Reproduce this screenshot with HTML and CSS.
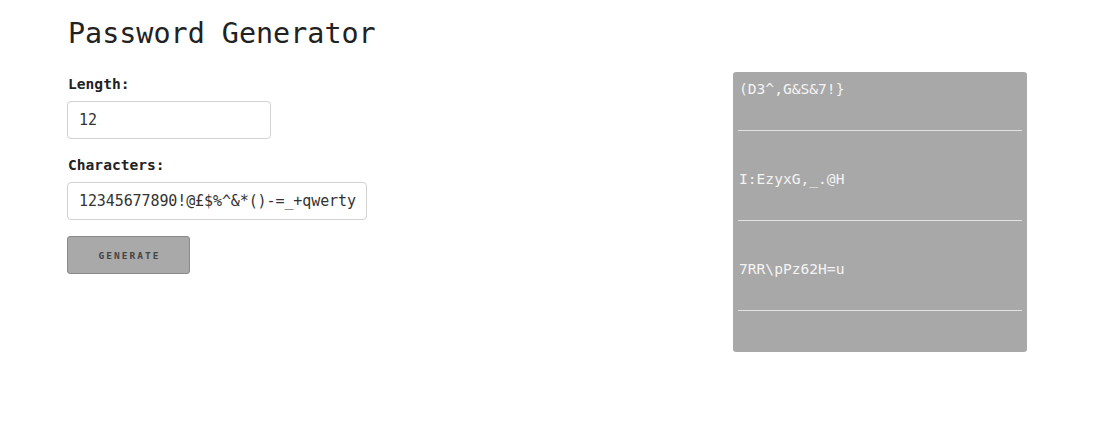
FILE: index.html
```html
<!DOCTYPE html>
<html>
<head>
<meta charset="utf-8">
<link rel="stylesheet" href="styles.css">
</head>
<body>
<div class="page">
  <div class="left">
    <h1 class="title">Password Generator</h1>
    <label class="label label-first">Length:</label>
    <input class="field field-short" type="text" value="12">
    <label class="label">Characters:</label>
    <input class="field field-long" type="text" value="12345677890!@£$%^&amp;*()-=_+qwerty">
    <button class="btn">GENERATE</button>
  </div>
  <div class="panel">
    <div class="entry">(D3^,G&amp;S&amp;7!}</div>
    <div class="entry">I:EzyxG,_.@H</div>
    <div class="entry">7RR\pPz62H=u</div>
  </div>
</div>
</body>
</html>
```
FILE: styles.css
```css
html, body {
  margin: 0;
  padding: 0;
  background: #fff;
}
body {
  font-family: "DejaVu Sans Mono", "Liberation Mono", monospace;
  color: #222;
}
.page {
  display: flex;
  align-items: flex-start;
  padding-left: 67px;
  padding-top: 14px;
}
.left {
  display: flex;
  flex-direction: column;
  align-items: flex-start;
  width: 666px;
}
.title {
  font-size: 28.4px;
  font-weight: normal;
  margin: 0 0 0 1px;
  line-height: 40px;
  color: #222;
}
.label {
  font-size: 14.6px;
  font-weight: bold;
  margin: 16px 0 0 1px;
  line-height: 20px;
  color: #222;
}
.label-first {
  margin-top: 20px;
}
.field {
  font-family: "DejaVu Sans Mono", "Liberation Mono", monospace;
  font-size: 15px;
  letter-spacing: -0.1px;
  line-height: 36px;
  color: #333;
  height: 38px;
  box-sizing: border-box;
  border: 1px solid #d1d1d1;
  border-radius: 4px;
  padding: 0 4px 0 11px;
  margin-top: 7px;
  background: #fff;
  outline: none;
}
.field-short { width: 204px; }
.field-long { width: 300px; }
.btn {
  margin-top: 16px;
  width: 123px;
  height: 38px;
  box-sizing: border-box;
  background: #a9a9a9;
  border: 1px solid #8a8a8a;
  border-radius: 3px;
  font-family: "DejaVu Sans Mono", "Liberation Mono", monospace;
  font-size: 9.5px;
  font-weight: bold;
  letter-spacing: 2px;
  color: #444;
  padding: 0 0 0 2px;
}
.panel {
  margin-top: 58px;
  width: 294px;
  height: 280px;
  box-sizing: border-box;
  background: #a8a8a8;
  border-radius: 3px;
  padding: 8px 5px 0 5px;
  display: flex;
  flex-direction: column;
  gap: 39px;
}
.entry {
  font-size: 14.6px;
  line-height: 18px;
  color: #f4f4f4;
  padding: 0 0 32px 1px;
  border-bottom: 1px solid #e2e2e2;
}
```
